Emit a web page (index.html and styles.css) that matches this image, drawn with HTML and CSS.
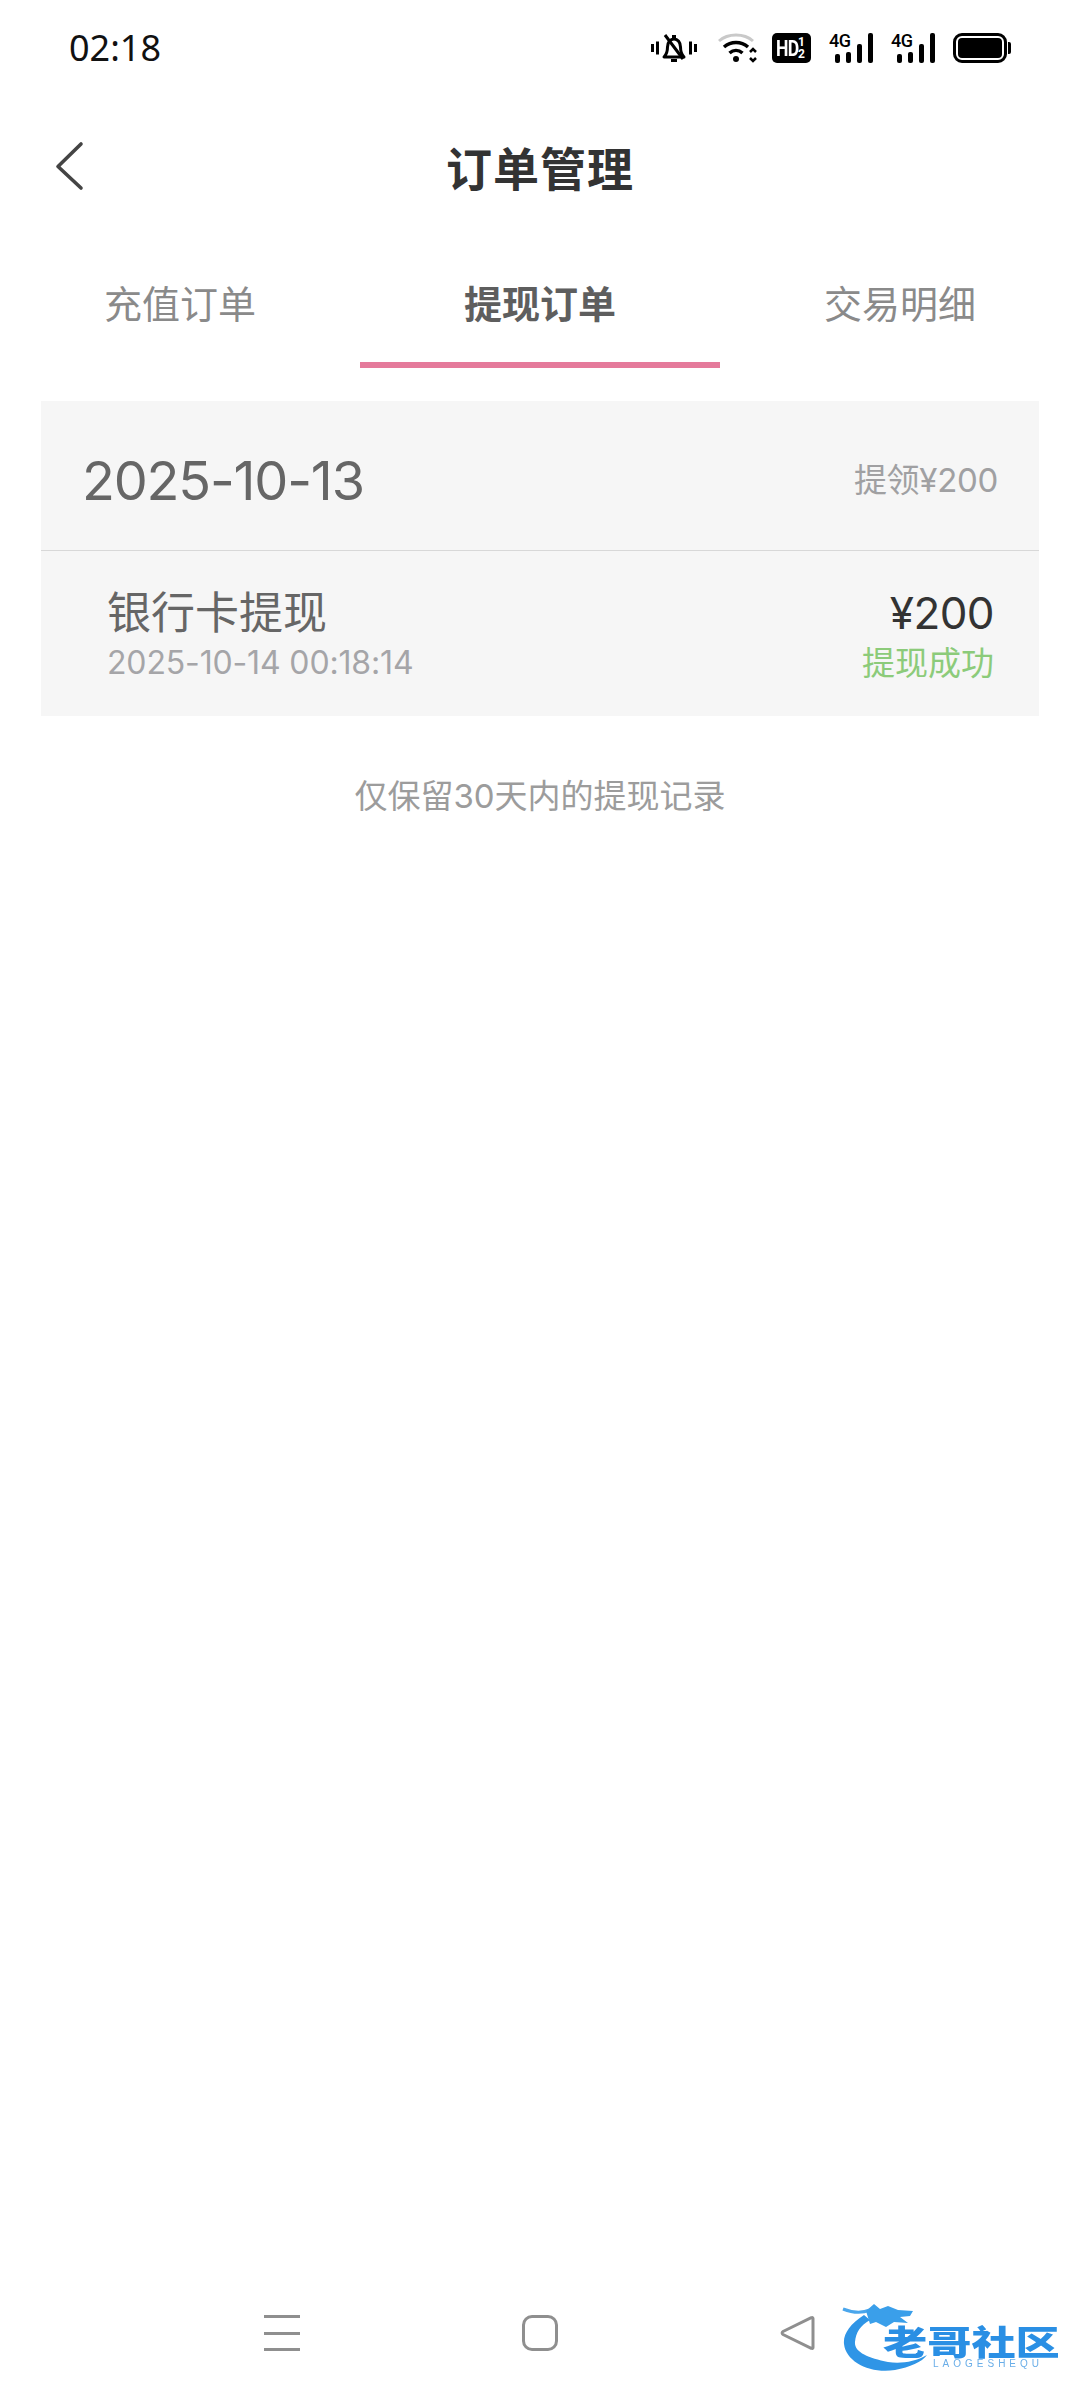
FILE: index.html
```html
<!DOCTYPE html>
<html lang="zh-CN">
<head>
<meta charset="UTF-8">
<meta name="viewport" content="width=device-width, initial-scale=1.0">
<title>订单管理</title>
<link rel="stylesheet" href="styles.css">
</head>
<body>

<div class="page">
  <!-- Status bar -->
  <div class="status-bar">
    <span class="clock">02:18</span>
    <div class="status-icons">
      <svg class="ic-bell" width="46" height="30" viewBox="0 0 46 30">
        <path d="M1.500 11v8M6.500 8.500v13M39.500 8.500v13M44.500 11v8" stroke="#000" stroke-width="3" fill="none"/>
        <path d="M13 24h20c-3-3-3.500-5-3.500-10 0-4.500-2.800-8-6.500-8s-6.500 3.500-6.500 8c0 5-.5 7-3.500 10z" stroke="#000" stroke-width="3" fill="none" stroke-linejoin="round"/>
        <path d="M21 3.500h4M20 27.500h6M14 2l18 24" stroke="#000" stroke-width="3" fill="none"/>
      </svg>
      <svg class="ic-wifi" width="42" height="30" viewBox="0 0 42 30">
        <path d="M2 8C11 0 27 0 36 8" stroke="#c9c9c9" stroke-width="3" fill="none"/>
        <path d="M7 14c7-6 17-6 24 0M12.500 20c4-3.500 9-3.500 13 0" stroke="#000" stroke-width="3.500" fill="none"/>
        <circle cx="19" cy="26" r="3" fill="#000"/>
        <path d="M33 19l3-3 3 3M33 25l3 3 3-3" stroke="#000" stroke-width="2.500" fill="none"/>
      </svg>
      <div class="hd-badge"><span class="hd-text">HD</span><span class="hd-frac"><i>1</i><i>2</i></span></div>
      <div class="signal">
        <span class="net">4G</span>
        <span class="bars"><i class="b1"></i><i class="b2"></i><i class="b3"></i><i class="b4"></i></span>
      </div>
      <div class="signal">
        <span class="net">4G</span>
        <span class="bars"><i class="b1"></i><i class="b2"></i><i class="b3"></i><i class="b4"></i></span>
      </div>
      <div class="battery"><div class="battery-body"><div class="battery-fill"></div></div><div class="battery-cap"></div></div>
    </div>
  </div>

  <!-- Header -->
  <div class="header">
    <svg class="back" width="30" height="50" viewBox="0 0 30 50">
      <path d="M26 3L3 25.500 26 47" stroke="#444" stroke-width="3.600" fill="none" stroke-linecap="round" stroke-linejoin="round"/>
    </svg>
    <h1 class="title">订单管理</h1>
  </div>

  <!-- Tabs -->
  <div class="tabs">
    <div class="tab">充值订单</div>
    <div class="tab active">提现订单</div>
    <div class="tab">交易明细</div>
  </div>

  <!-- Record list -->
  <div class="card">
    <div class="card-head">
      <span class="card-date">2025-10-13</span>
      <span class="card-total">提领¥200</span>
    </div>
    <div class="record">
      <div class="record-left">
        <div class="record-name">银行卡提现</div>
        <div class="record-time">2025-10-14 00:18:14</div>
      </div>
      <div class="record-right">
        <div class="record-amount">¥200</div>
        <div class="record-state">提现成功</div>
      </div>
    </div>
  </div>

  <p class="note">仅保留30天内的提现记录</p>

  <!-- Navigation bar -->
  <div class="nav-bar">
    <div class="nav-menu"><i></i><i></i><i></i></div>
    <div class="nav-home"></div>
    <svg class="nav-back" width="36" height="36" viewBox="0 0 36 36">
      <path d="M33 3.500v29c0 1-.8 1.300-1.700.8L3 19.500c-1.200-.7-1.200-2.300 0-3L31.300 2.700c.9-.5 1.700-.2 1.700.8z" stroke="#8f8f8f" stroke-width="3" fill="none" stroke-linejoin="round"/>
    </svg>
  </div>

  <!-- Watermark over the corner -->
  <div class="watermark">
    <svg class="wm-dragon" width="120" height="76" viewBox="0 0 120 76">
      <path d="M24 13C10 22 3 32 4 42c2 18 26 30 51 26 15-3 27-8 32-15-12 7-27 9-39 7C28 56 14 50 15 40c1-10 5-16 15-22z" fill="#2f95e6"/>
      <path d="M3 7q15 6 27 1" stroke="#4aa6ec" stroke-width="3" fill="none"/>
      <path d="M26 9l8-7 6 5 8-3 10 4 15 1-3 5-10 1 8 6-14-1-8 5-10-5-6 2z" fill="#3a9fea"/>
    </svg>
    <span class="wm-name">老哥社区</span>
    <span class="wm-latin">LAOGESHEQU</span>
  </div>
</div>

</body>
</html>
```

FILE: styles.css
```css
/* Order management page */
* {
  box-sizing: border-box;
}

body {
  margin: 0;
  background-color: #fff;
  font-family: Inter, "Noto Sans CJK SC", sans-serif;
}

.page {
  position: relative;
  width: 1080px;
  height: 2400px;
  display: flex;
  flex-direction: column;
}

/* Status bar */
.status-bar {
  height: 96px;
  padding: 0 69px 0 69px;
  display: flex;
  align-items: center;
  justify-content: space-between;
}

.clock {
  font-family: "Noto Sans", sans-serif;
  font-size: 36px;
  line-height: 44px;
  color: #111;
}

.status-icons {
  display: flex;
  align-items: center;
}

.ic-bell {
  margin-right: 20px;
}

.ic-wifi {
  margin-right: 13px;
}

.hd-badge {
  width: 39px;
  height: 30px;
  margin-right: 18px;
  padding-left: 4px;
  background-color: #000;
  border-radius: 5px;
  color: #fff;
  display: flex;
  align-items: center;
  font-family: "Roboto", sans-serif;
  font-weight: 700;
}

.hd-text {
  width: 22px;
  font-size: 22px;
  letter-spacing: -1px;
  transform: scaleX(.8);
  transform-origin: left center;
}

.hd-frac {
  display: flex;
  flex-direction: column;
  font-size: 12px;
  line-height: 12px;
}

.hd-frac i {
  font-style: normal;
}

.signal {
  position: relative;
  width: 44px;
  height: 30px;
  margin-right: 18px;
}

.net {
  position: absolute;
  left: 0;
  top: -3px;
  font-family: "Roboto", sans-serif;
  font-size: 18px;
  font-weight: 500;
  letter-spacing: -.5px;
  color: #000;
}

.bars {
  display: flex;
  align-items: flex-end;
  gap: 6px;
  height: 30px;
  padding-left: 6px;
}

.bars i {
  width: 5px;
  background-color: #000;
  border-radius: 2px;
}

.bars .b1 { height: 9px; }
.bars .b2 { height: 11px; }
.bars .b3 { height: 19px; }
.bars .b4 { height: 30px; }

.battery {
  display: flex;
  align-items: center;
}

.battery-body {
  width: 54px;
  height: 30px;
  padding: 2px;
  border: 3px solid #000;
  border-radius: 9px;
  background-color: #fff;
}

.battery-fill {
  height: 100%;
  background-color: #000;
  border-radius: 4px;
}

.battery-cap {
  width: 3px;
  height: 12px;
  margin-left: 1px;
  background-color: #000;
  border-radius: 0 2px 2px 0;
}

/* Header */
.header {
  position: relative;
  height: 76px;
  margin-top: 36px;
  padding-bottom: 8px;
  display: flex;
  align-items: center;
  justify-content: center;
}

.back {
  position: absolute;
  left: 55px;
  top: 9px;
}

.title {
  margin: 0;
  font-size: 46px;
  font-weight: 700;
  color: #333;
  letter-spacing: 1px;
}

/* Tabs */
.tabs {
  display: flex;
}

.tab {
  width: 360px;
  height: 160px;
  padding-top: 68px;
  text-align: center;
  font-size: 38px;
  line-height: 56px;
  color: #8a8a8a;
}

.tab.active {
  color: #5e5e5e;
  font-weight: 700;
  border-bottom: 6px solid #e57a9b;
}

/* Record list */
.card {
  margin: 33px 41px 0;
  background-color: #f6f6f6;
}

.card-head {
  height: 150px;
  padding: 10px 41px 0;
  border-bottom: 1px solid #d8d8d8;
  display: flex;
  align-items: center;
  justify-content: space-between;
}

.card-date {
  font-size: 54px;
  letter-spacing: -1.200px;
  color: #666;
}

.card-total {
  margin-bottom: 6px;
  font-size: 33px;
  letter-spacing: -.3px;
  color: #a0a0a2;
}

.record {
  height: 165px;
  padding: 34px 45px 0 66px;
  display: flex;
  justify-content: space-between;
}

.record-name {
  font-size: 44px;
  line-height: 56px;
  color: #666;
}

.record-time {
  font-size: 32px;
  line-height: 44px;
  letter-spacing: -.15px;
  color: #a5a5a8;
}

.record-right {
  text-align: right;
}

.record-amount {
  font-size: 44px;
  line-height: 56px;
  letter-spacing: -.6px;
  color: #333;
}

.record-state {
  font-size: 33px;
  line-height: 44px;
  color: #8ccb7a;
}

.note {
  margin: 52px 0 0;
  text-align: center;
  font-size: 33px;
  line-height: 56px;
  color: #9c9c9c;
}

/* Navigation bar */
.nav-bar {
  margin-top: auto;
  height: 68px;
  margin-bottom: 33px;
  padding-left: 264px;
  display: flex;
  align-items: center;
}

.nav-menu {
  width: 36px;
  height: 36px;
  display: flex;
  flex-direction: column;
  justify-content: space-between;
}

.nav-menu i {
  height: 3px;
  background-color: #8f8f8f;
}

.nav-home {
  width: 36px;
  height: 36px;
  margin-left: 222px;
  border: 3px solid #8f8f8f;
  border-radius: 10px;
}

.nav-back {
  margin-left: 222px;
}

/* Watermark */
.watermark {
  position: absolute;
  left: 840px;
  top: 2302px;
  width: 230px;
  height: 76px;
  filter: blur(.7px);
}

.wm-dragon {
  position: absolute;
  left: 0;
  top: 0;
}

.wm-name {
  position: absolute;
  left: 43px;
  top: 22px;
  font-family: "Noto Sans CJK SC", sans-serif;
  font-size: 34px;
  line-height: 34px;
  font-weight: 900;
  color: #2a8fe4;
  white-space: nowrap;
  transform: scaleX(1.3);
  transform-origin: left center;
}

.wm-latin {
  position: absolute;
  left: 93px;
  top: 57px;
  font-family: "Liberation Sans", sans-serif;
  font-size: 10px;
  line-height: 10px;
  letter-spacing: 4px;
  color: #6aaee8;
  white-space: nowrap;
}
```
